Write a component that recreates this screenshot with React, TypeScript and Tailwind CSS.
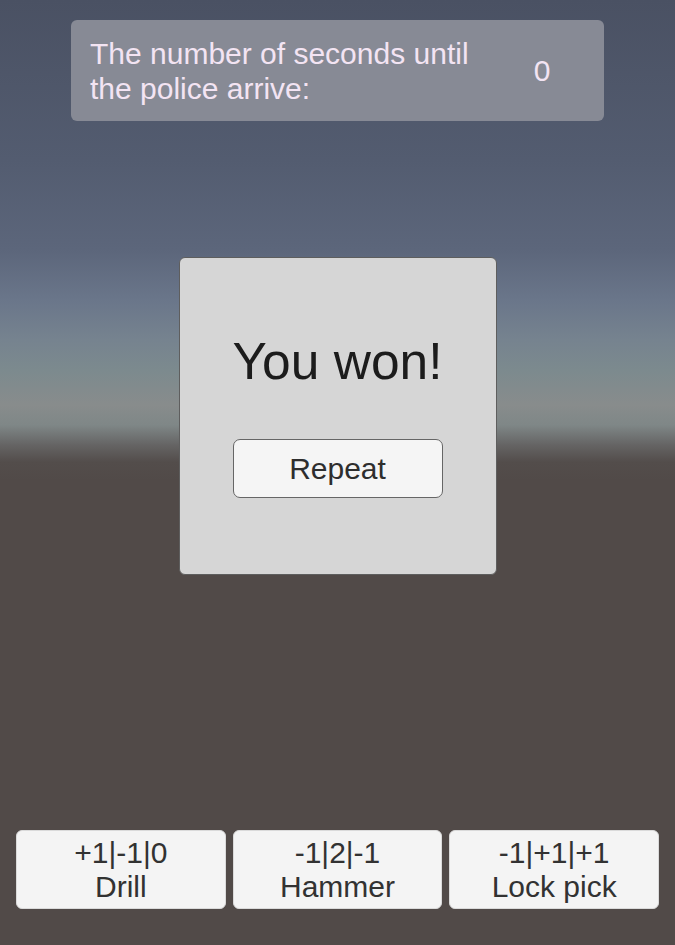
const tools = [
  { stats: "+1|-1|0", name: "Drill" },
  { stats: "-1|2|-1", name: "Hammer" },
  { stats: "-1|+1|+1", name: "Lock pick" },
];

export default function App() {
  return (
    <div className="flex h-[945px] w-full flex-col font-['Liberation_Sans',Arial,sans-serif] bg-[linear-gradient(to_bottom,#4a5163_0px,#535c70_160px,#5c667b_250px,#6a768a_300px,#76838f_340px,#7c8a8e_370px,#888c8c_405px,#7f8787_425px,#656464_445px,#534d4b_462px,#514a48_480px,#514a48_945px)]">
      {/* timer panel */}
      <div className="mx-auto mt-[20px] flex h-[101px] w-[533px] items-center rounded-[6px] bg-[#878a95] pl-[19px] text-[#f3e4f3]">
        <p className="flex-1 text-[30px] leading-[35px]">
          The number of seconds until
          <br />
          the police arrive:
        </p>
        <span className="w-[124px] text-center text-[30px] leading-[35px]">0</span>
      </div>

      {/* result dialog */}
      <div className="mx-auto mt-[136px] flex h-[318px] w-[318px] flex-col items-center rounded-[6px] border border-[#5e5e5e] bg-[#d6d6d6] pt-[76px]">
        <h1 className="text-[51.5px] leading-[54px] text-[#1c1c1c]">You won!</h1>
        <button className="mt-[51px] h-[59px] w-[210px] rounded-[7px] border border-[#666] bg-[#f5f5f5] text-[30px] text-[#2e2e2e]">
          Repeat
        </button>
      </div>

      <div className="flex-1" />

      {/* tool buttons */}
      <div className="grid grid-cols-3 gap-[7px] px-[16px] pb-[36px]">
        {tools.map((t) => (
          <button
            key={t.name}
            className="flex h-[79px] flex-col items-center justify-center rounded-[6px] border border-[#dadada] bg-[#f4f4f4] text-[30px] leading-[34px] text-[#323232]"
          >
            <span>{t.stats}</span>
            <span>{t.name}</span>
          </button>
        ))}
      </div>
    </div>
  );
}
